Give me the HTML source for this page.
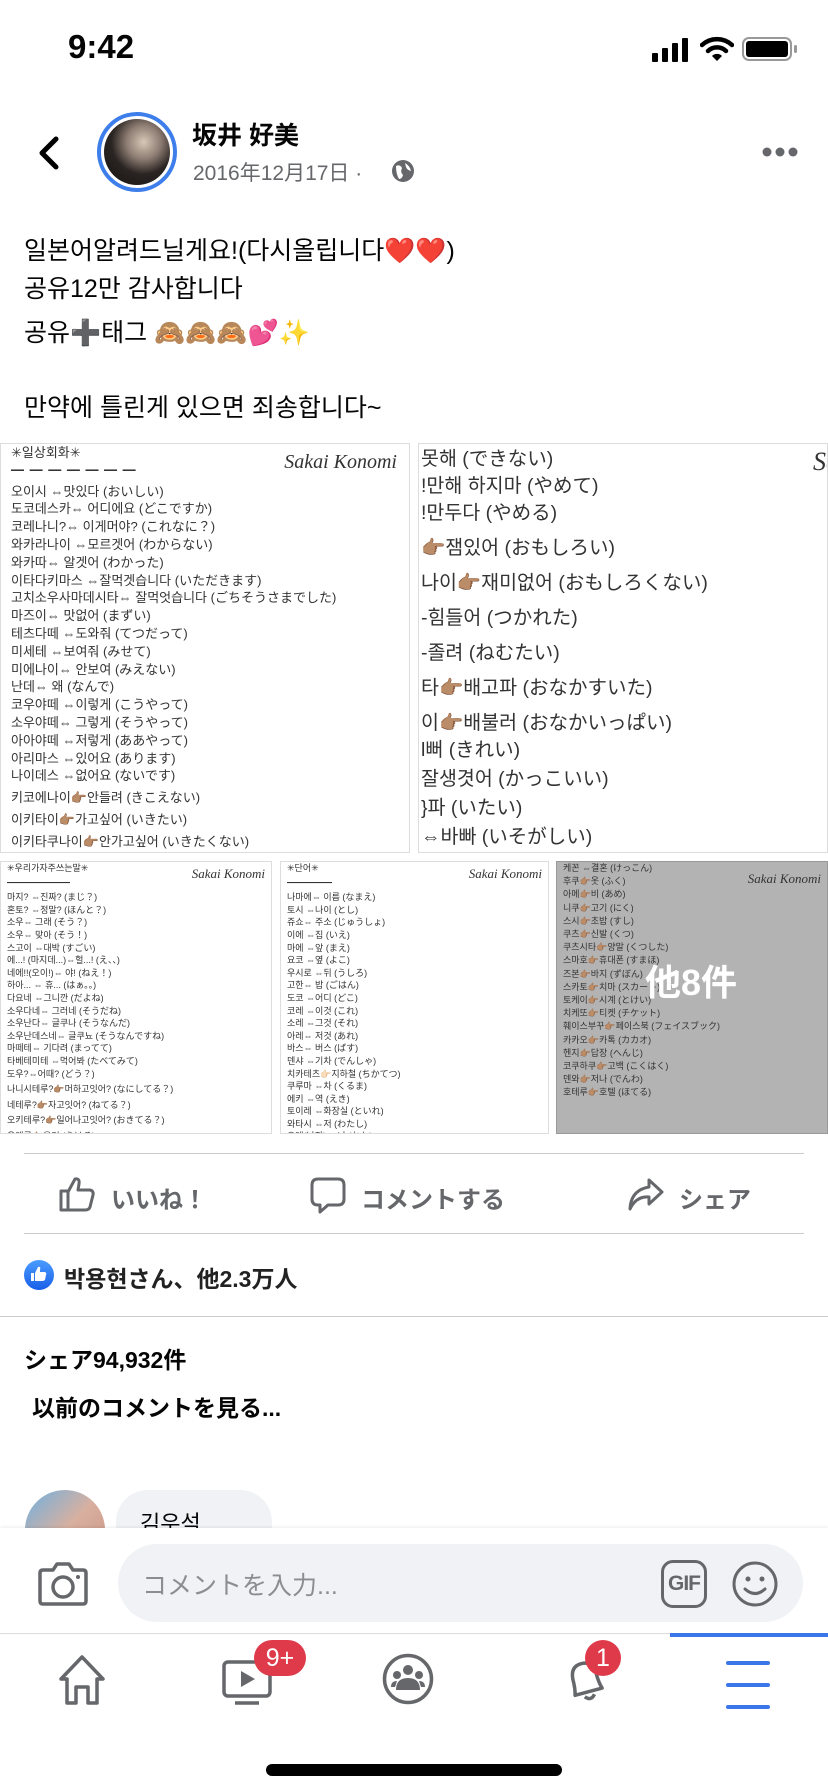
<!DOCTYPE html>
<html><head><meta charset="utf-8"><style>
*{margin:0;padding:0;box-sizing:border-box}
body{width:828px;height:1792px;background:#fff;position:relative;overflow:hidden;font-family:"Liberation Sans","Noto Sans CJK KR","Noto Sans CJK JP",sans-serif;color:#050505}
.a{position:absolute;white-space:nowrap}
.img{position:absolute;overflow:hidden;background:#fff;border:1px solid #ddd}
.img div{white-space:nowrap;color:#333}
.logo{position:absolute;font-family:"Liberation Serif",serif;font-style:italic;color:#3a7fa8}
.gray{color:#65676b}
</style></head><body>

<!-- status bar -->
<div class="a" style="left:68px;top:28px;font-size:33px;font-weight:bold">9:42</div>
<svg class="a" style="left:652px;top:38px" width="40" height="24"><rect x="0" y="15" width="6" height="9" rx="1"/><rect x="10" y="10" width="6" height="14" rx="1"/><rect x="20" y="5" width="6" height="19" rx="1"/><rect x="30" y="0" width="6" height="24" rx="1"/></svg>
<svg class="a" style="left:700px;top:36px" width="34" height="26" viewBox="0 0 34 26"><path d="M2 9 A22 22 0 0 1 32 9" stroke="#000" stroke-width="4.5" fill="none" stroke-linecap="round"/><path d="M8 15 A13 13 0 0 1 26 15" stroke="#000" stroke-width="4.5" fill="none" stroke-linecap="round"/><path d="M12 20 L17 25 L22 20 A7 7 0 0 0 12 20Z"/></svg>
<div class="a" style="left:742px;top:37px;width:50px;height:24px;border:2px solid #999;border-radius:7px"></div>
<div class="a" style="left:746px;top:41px;width:42px;height:16px;background:#000;border-radius:3px"></div>
<div class="a" style="left:794px;top:45px;width:3px;height:8px;background:#999;border-radius:2px"></div>

<!-- header -->
<svg class="a" style="left:36px;top:136px" width="24" height="34"><path d="M20 3 L6 17 L20 31" stroke="#000" stroke-width="5" fill="none" stroke-linecap="round" stroke-linejoin="round"/></svg>
<div class="a" style="left:97px;top:112px;width:80px;height:80px;border-radius:50%;border:4px solid #3d7eea;background:#fff"></div>
<div class="a" style="left:104px;top:119px;width:66px;height:66px;border-radius:50%;background:radial-gradient(circle at 60% 35%,#d8c8b8 0,#8a7a70 30%,#2a2422 55%,#141210 100%)"></div>
<div class="a" style="left:192px;top:116px;font-size:25px;font-weight:bold">坂井 好美</div>
<div class="a gray" style="left:193px;top:157px;font-size:21px">2016年12月17日 ·</div>
<svg class="a" style="left:390px;top:158px" width="26" height="26"><circle cx="13" cy="13" r="11" fill="#65676b"/><path d="M6 8 Q10 6 12 10 Q10 14 13 17 Q12 21 9 21 Q6 16 6 8Z M15 5 Q20 8 21 13 Q17 12 16 9Z" fill="#fff"/></svg>
<svg class="a" style="left:762px;top:147px" width="36" height="10"><circle cx="5" cy="5" r="4.5" fill="#65676b"/><circle cx="18" cy="5" r="4.5" fill="#65676b"/><circle cx="31" cy="5" r="4.5" fill="#65676b"/></svg>

<!-- post text -->
<div class="a" style="left:24px;top:232px;font-size:25px;line-height:38px">일본어알려드닐게요!(다시올립니다<span style="color:#e0302a">❤️❤️</span>)</div>
<div class="a" style="left:24px;top:270px;font-size:25px;line-height:38px">공유12만 감사합니다</div>
<div class="a" style="left:24px;top:314px;font-size:25px;line-height:38px">공유<b style="color:#555">➕</b>태그 <span style="color:#b08a5a">🙈🙈🙈</span><span style="color:#e040a0">💕</span><span style="color:#f0c040">✨</span></div>
<div class="a" style="left:24px;top:389px;font-size:25px;line-height:38px">만약에 틀린게 있으면 죄송합니다~</div>

<!-- top-left image -->
<div class="img" style="left:0;top:443px;width:410px;height:410px;font-size:13px;line-height:17.8px;padding:0 0 0 10px">
<div style="margin-top:0px">✳일상회화✳</div>
<div style="font-weight:bold;letter-spacing:1px;margin-bottom:3px">━ ━ ━ ━ ━ ━ ━</div>
<div>오이시 ⇔맛있다 (おいしい)</div>
<div>도코데스카⇔ 어디에요 (どこですか)</div>
<div>코레나니?⇔ 이게머야? (これなに？)</div>
<div>와카라나이 ⇔모르겟어 (わからない)</div>
<div>와카따⇔ 알겟어 (わかった)</div>
<div>이타다키마스 ⇔잘먹겟습니다 (いただきます)</div>
<div>고치소우사마데시타⇔ 잘먹엇습니다 (ごちそうさまでした)</div>
<div>마즈이⇔ 맛없어 (まずい)</div>
<div>테츠다떼 ⇔도와줘 (てつだって)</div>
<div>미세테 ⇔보여줘 (みせて)</div>
<div>미에나이⇔ 안보여 (みえない)</div>
<div>난데⇔ 왜 (なんで)</div>
<div>코우야떼 ⇔이렇게 (こうやって)</div>
<div>소우야떼⇔ 그렇게 (そうやって)</div>
<div>아아야떼 ⇔저렇게 (ああやって)</div>
<div>아리마스 ⇔있어요 (あります)</div>
<div>나이데스 ⇔없어요 (ないです)</div>
<div style="margin-top:4px">키코에나이👉🏽안들려 (きこえない)</div>
<div style="margin-top:4px">이키타이👉🏽가고싶어 (いきたい)</div>
<div style="margin-top:4px">이키타쿠나이👉🏽안가고싶어 (いきたくない)</div>
<div class="logo" style="right:12px;top:10px;font-size:20px">Sakai Konomi</div>
</div>

<!-- top-right image -->
<div class="img" style="left:418px;top:443px;width:410px;height:410px;font-size:19.5px;line-height:27px;padding:0 0 0 2px">
<div style="margin-top:2px">못해 (できない)</div>
<div>!만해 하지마 (やめて)</div>
<div>!만두다 (やめる)</div>
<div style="margin-top:8px">👉🏽잼있어 (おもしろい)</div>
<div style="margin-top:8px">나이👉🏽재미없어 (おもしろくない)</div>
<div style="margin-top:8px">-힘들어 (つかれた)</div>
<div style="margin-top:8px">-졸려 (ねむたい)</div>
<div style="margin-top:8px">타👉🏽배고파 (おなかすいた)</div>
<div style="margin-top:8px">이👉🏽배불러 (おなかいっぱい)</div>
<div>l뻐 (きれい)</div>
<div style="margin-top:2px"> 잘생겻어 (かっこいい)</div>
<div style="margin-top:2px">}파 (いたい)</div>
<div style="margin-top:2px"> ⇔바빠 (いそがしい)</div>
<div class="logo" style="right:-12px;top:4px;font-size:26px">Sa</div>
</div>

<!-- bottom images -->
<div class="img" style="left:0;top:861px;width:272px;height:273px;font-size:9px;line-height:12.6px;padding:0 0 0 6px">
<div>✳우리가자주쓰는말✳</div>
<div style="font-weight:bold;margin:2px 0">━━━━━━━</div>
<div>마지? ⇔진짜? (まじ？)</div><div>혼토? ⇔정말? (ほんと？)</div><div>소우⇔ 그래 (そう？)</div><div>소우⇔ 맞아 (そう！)</div><div>스고이 ⇔대박 (すごい)</div><div>에...! (마지데...)⇔헐...! (え、、)</div><div>네에!!(오이!)⇔ 야! (ねえ！)</div><div>하아... ⇔ 휴... (はぁ。。)</div><div>다요네 ⇔그니깐 (だよね)</div><div>소우다네⇔ 그러네 (そうだね)</div><div>소우난다⇔ 글쿠나 (そうなんだ)</div><div>소우난데스네⇔ 글쿠뇨 (そうなんですね)</div><div>마떼테⇔ 기다려 (まってて)</div><div>타베테미테 ⇔먹어봐 (たべてみて)</div><div>도우?⇔어때? (どう？)</div><div style="margin-top:3px">나니시테루?👉🏽머하고잇어? (なにしてる？)</div><div style="margin-top:3px">네테루?👉🏽자고잇어? (ねてる？)</div><div style="margin-top:3px">오키테루?👉🏽일어나고잇어? (おきてる？)</div><div style="margin-top:3px">우케루👉🏽웃겨 (うける)</div>
<div class="logo" style="right:6px;top:6px;font-size:13px">Sakai Konomi</div>
</div>
<div class="img" style="left:280px;top:861px;width:269px;height:273px;font-size:9px;line-height:12.6px;padding:0 0 0 6px">
<div>✳단어✳</div>
<div style="font-weight:bold;margin:2px 0">━━━━━</div>
<div>나마에⇔ 이름 (なまえ)</div><div>토시 ⇔나이 (とし)</div><div>쥬쇼⇔ 주소 (じゅうしょ)</div><div>이에 ⇔집 (いえ)</div><div>마에 ⇔앞 (まえ)</div><div>요코 ⇔옆 (よこ)</div><div>우시로 ⇔뒤 (うしろ)</div><div>고한⇔ 밥 (ごはん)</div><div>도코 ⇔어디 (どこ)</div><div>코레 ⇔이것 (これ)</div><div>소레 ⇔그것 (それ)</div><div>아레⇔ 저것 (あれ)</div><div>바스⇔ 버스 (ばす)</div><div>덴샤 ⇔기차 (でんしゃ)</div><div>치카테츠👉🏻지하철 (ちかてつ)</div><div>쿠루마 ⇔차 (くるま)</div><div>에키 ⇔역 (えき)</div><div>토이레 ⇔화장실 (といれ)</div><div>와타시 ⇔저 (わたし)</div><div>오레(남자) ⇔나 (おれ)</div><div>와타시(여자)⇔ 나 (わたし)</div>
<div class="logo" style="right:6px;top:6px;font-size:13px">Sakai Konomi</div>
</div>
<div class="img" style="left:556px;top:861px;width:272px;height:273px;font-size:9px;line-height:13.2px;padding:0 0 0 6px;background:#b3b3b3;border-color:#999">
<div>케꼰 ⇔결혼 (けっこん)</div><div>후쿠👉🏽옷 (ふく)</div><div>아메👉🏽비 (あめ)</div><div>니쿠👉🏽고기 (にく)</div><div>스시👉🏽초밥 (すし)</div><div>쿠츠👉🏽신발 (くつ)</div><div>쿠츠시타👉🏽양말 (くつした)</div><div>스마호👉🏽휴대폰 (すまほ)</div><div>즈본👉🏽바지 (ずぼん)</div><div>스카토👉🏽치마 (スカート)</div><div>토케이👉🏽시계 (とけい)</div><div>치케또👉🏽티켓 (チケット)</div><div>훼이스부꾸👉🏽페이스북 (フェイスブック)</div><div>카카오👉🏽카톡 (カカオ)</div><div>헨지👉🏽답장 (へんじ)</div><div>코쿠하쿠👉🏽고백 (こくはく)</div><div>덴와👉🏽저나 (でんわ)</div><div>호테루👉🏽호텔 (ほてる)</div>
<div class="logo" style="right:6px;top:10px;font-size:13px">Sakai Konomi</div>
<div class="a" style="left:88px;top:114px;font-size:36px;font-weight:bold;color:#fff;font-family:'Liberation Sans','Noto Sans CJK JP',sans-serif">他8件</div>
</div>

<!-- actions -->
<div class="a" style="left:24px;top:1153px;width:780px;height:1px;background:#ccc"></div>
<svg class="a" style="left:58px;top:1175px" width="38" height="38" viewBox="0 0 38 38"><path d="M3 16 H10 V35 H3Z M10 17 L17 4 Q22 3 21 9 L20 15 H32 Q36 16 35 20 L32 32 Q31 35 27 35 H10" stroke="#65676b" stroke-width="3" fill="none" stroke-linejoin="round"/></svg>
<div class="a gray" style="left:111px;top:1180px;font-size:24px;font-weight:bold">いいね！</div>
<svg class="a" style="left:310px;top:1177px" width="36" height="38" viewBox="0 0 36 38"><path d="M8 2 H28 Q34 2 34 8 V22 Q34 28 28 28 H18 L10 35 V28 H8 Q2 28 2 22 V8 Q2 2 8 2Z" stroke="#65676b" stroke-width="3" fill="none" stroke-linejoin="round"/></svg>
<div class="a gray" style="left:361px;top:1180px;font-size:24px;font-weight:bold">コメントする</div>
<svg class="a" style="left:627px;top:1177px" width="38" height="36" viewBox="0 0 38 36"><path d="M22 3 L35 15 L22 27 V20 Q9 19 3 32 Q4 13 22 10Z" stroke="#65676b" stroke-width="3" fill="none" stroke-linejoin="round"/></svg>
<div class="a gray" style="left:679px;top:1180px;font-size:24px;font-weight:bold">シェア</div>
<div class="a" style="left:24px;top:1233px;width:780px;height:1px;background:#ccc"></div>

<div class="a" style="left:24px;top:1260px;width:30px;height:30px;border-radius:50%;background:linear-gradient(#4a9cff,#1a5fe8)"></div>
<svg class="a" style="left:30px;top:1265px" width="18" height="18" viewBox="0 0 18 18"><path d="M1 8 H4 V16 H1Z M5 8 L8 2 Q11 1 10 5 V7 H15 Q17 8 16 10 L15 15 Q14 16 12 16 H5Z" fill="#fff"/></svg>
<div class="a" style="left:64px;top:1260px;font-size:23px;font-weight:bold;color:#222">박용현さん、他2.3万人</div>
<div class="a" style="left:0;top:1316px;width:828px;height:1px;background:#ccc"></div>

<div class="a" style="left:24px;top:1341px;font-size:23px;font-weight:bold">シェア94,932件</div>
<div class="a" style="left:32px;top:1389px;font-size:23px;font-weight:bold">以前のコメントを見る...</div>

<div class="a" style="left:25px;top:1490px;width:80px;height:80px;border-radius:50%;background:linear-gradient(135deg,#6fb0e0,#d8b0a0 50%,#c89080)"></div>
<div class="a" style="left:116px;top:1490px;width:156px;height:80px;border-radius:32px;background:#f0f2f5"></div>
<div class="a" style="left:140px;top:1506px;font-size:22px">김우석</div>

<!-- composer -->
<div class="a" style="left:0;top:1528px;width:828px;height:106px;background:#fff;box-shadow:0 -1px 3px rgba(0,0,0,0.08)"></div>
<svg class="a" style="left:38px;top:1560px" width="50" height="46" viewBox="0 0 50 46"><path d="M5 10 H15 L19 4 H31 L35 10 H45 Q48 10 48 13 V41 Q48 44 45 44 H5 Q2 44 2 41 V13 Q2 10 5 10Z" stroke="#65676b" stroke-width="3.5" fill="none" stroke-linejoin="round"/><circle cx="25" cy="27" r="10" stroke="#65676b" stroke-width="3.5" fill="none"/><circle cx="40" cy="17" r="2" fill="#65676b"/></svg>
<div class="a" style="left:118px;top:1544px;width:685px;height:78px;border-radius:39px;background:#f0f2f5"></div>
<div class="a" style="left:142px;top:1566px;font-size:25px;color:#8a8d91">コメントを入力...</div>
<div class="a" style="left:661px;top:1560px;width:46px;height:48px;border:3px solid #65676b;border-radius:12px;font-size:21px;font-weight:bold;color:#65676b;text-align:center;line-height:42px;letter-spacing:-1px">GIF</div>
<svg class="a" style="left:731px;top:1560px" width="48" height="48" viewBox="0 0 48 48"><circle cx="24" cy="24" r="21" stroke="#65676b" stroke-width="3" fill="none"/><circle cx="17" cy="19" r="2.5" fill="#65676b"/><circle cx="31" cy="19" r="2.5" fill="#65676b"/><path d="M14 29 Q24 38 34 29" stroke="#65676b" stroke-width="3" fill="none" stroke-linecap="round"/></svg>

<!-- tab bar -->
<div class="a" style="left:0;top:1633px;width:828px;height:1px;background:#ddd"></div>
<div class="a" style="left:670px;top:1633px;width:158px;height:4px;background:#3b76e8"></div>
<svg class="a" style="left:57px;top:1654px" width="50" height="52" viewBox="0 0 50 52"><path d="M25 3 L46 25 H40 V49 H31 V33 H19 V49 H10 V25 H4Z" stroke="#65676b" stroke-width="3.5" fill="none" stroke-linejoin="round"/></svg>
<svg class="a" style="left:222px;top:1660px" width="50" height="46" viewBox="0 0 50 46"><rect x="2" y="2" width="46" height="34" rx="4" stroke="#65676b" stroke-width="3.5" fill="none"/><path d="M19 11 L33 19 L19 27Z" fill="#65676b"/><path d="M13 43 H37" stroke="#65676b" stroke-width="3.5"/></svg>
<div class="a" style="left:254px;top:1640px;width:52px;height:36px;border-radius:18px;background:#df3a4a;color:#fff;font-size:25px;text-align:center;line-height:36px">9+</div>
<svg class="a" style="left:382px;top:1653px" width="52" height="52" viewBox="0 0 52 52"><circle cx="26" cy="26" r="23.5" stroke="#65676b" stroke-width="3.5" fill="none"/><circle cx="26" cy="17" r="5" fill="#65676b"/><circle cx="15" cy="22" r="4" fill="#65676b"/><circle cx="37" cy="22" r="4" fill="#65676b"/><path d="M14 37 Q14 25 26 25 Q38 25 38 37Z M9 34 Q9 28 15 28 L13 34Z M43 34 Q43 28 37 28 L39 34Z" fill="#65676b"/></svg>
<svg class="a" style="left:560px;top:1654px" width="52" height="52" viewBox="0 0 52 52"><g transform="rotate(-15 26 28)"><path d="M12 38 Q14 32 14 22 Q15 9 26 9 Q37 9 38 22 Q38 32 40 38Z" stroke="#65676b" stroke-width="3.5" fill="none" stroke-linejoin="round"/><path d="M21 42 Q26 48 31 42" stroke="#65676b" stroke-width="3.5" fill="none"/></g></svg>
<div class="a" style="left:585px;top:1640px;width:36px;height:36px;border-radius:50%;background:#df3a4a;color:#fff;font-size:25px;text-align:center;line-height:36px">1</div>
<div class="a" style="left:726px;top:1661px;width:44px;height:4px;background:#3b76e8;border-radius:2px"></div>
<div class="a" style="left:726px;top:1683px;width:44px;height:4px;background:#3b76e8;border-radius:2px"></div>
<div class="a" style="left:726px;top:1705px;width:44px;height:4px;background:#3b76e8;border-radius:2px"></div>

<div class="a" style="left:266px;top:1764px;width:296px;height:12px;border-radius:6px;background:#000"></div>
</body></html>
